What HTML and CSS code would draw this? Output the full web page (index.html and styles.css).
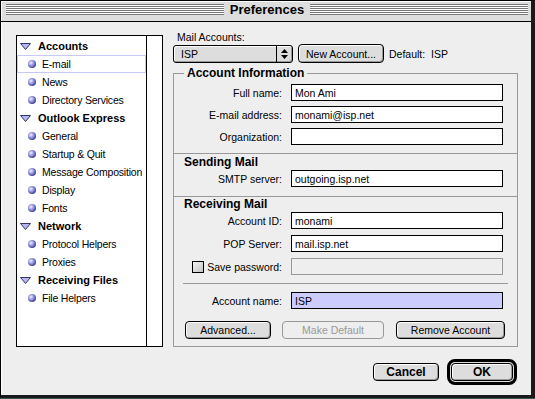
FILE: index.html
```html
<!DOCTYPE html>
<html lang="en">

<head>
    <meta charset="UTF-8">
    <meta name="viewport" content="width=device-width, initial-scale=1.0">
    <title>Preferences</title>
    <link rel="stylesheet" href="styles.css">
</head>

<body>

    <div class="window">

        <!-- Title bar -->
        <div class="titlebar">
            <span class="stripes"></span>
            <span class="title">Preferences</span>
            <span class="stripes"></span>
        </div>

        <div class="content">

            <!-- Category list -->
            <div class="sidebar">
                <ul class="tree">
                    <li class="group"><svg class="twisty" width="11" height="7" viewBox="0 0 11 7"><polygon points="0.5,0.5 10.5,0.5 5.5,6.5" fill="#b8b8f0" stroke="#33336a" stroke-width="1"/></svg>Accounts</li>
                    <li class="item selected"><span class="bullet"></span>E-mail</li>
                    <li class="item"><span class="bullet"></span>News</li>
                    <li class="item"><span class="bullet"></span>Directory Services</li>
                    <li class="group"><svg class="twisty" width="11" height="7" viewBox="0 0 11 7"><polygon points="0.5,0.5 10.5,0.5 5.5,6.5" fill="#b8b8f0" stroke="#33336a" stroke-width="1"/></svg>Outlook Express</li>
                    <li class="item"><span class="bullet"></span>General</li>
                    <li class="item"><span class="bullet"></span>Startup &amp; Quit</li>
                    <li class="item"><span class="bullet"></span>Message Composition</li>
                    <li class="item"><span class="bullet"></span>Display</li>
                    <li class="item"><span class="bullet"></span>Fonts</li>
                    <li class="group"><svg class="twisty" width="11" height="7" viewBox="0 0 11 7"><polygon points="0.5,0.5 10.5,0.5 5.5,6.5" fill="#b8b8f0" stroke="#33336a" stroke-width="1"/></svg>Network</li>
                    <li class="item"><span class="bullet"></span>Protocol Helpers</li>
                    <li class="item"><span class="bullet"></span>Proxies</li>
                    <li class="group"><svg class="twisty" width="11" height="7" viewBox="0 0 11 7"><polygon points="0.5,0.5 10.5,0.5 5.5,6.5" fill="#b8b8f0" stroke="#33336a" stroke-width="1"/></svg>Receiving Files</li>
                    <li class="item"><span class="bullet"></span>File Helpers</li>
                </ul>
                <div class="scroll-track"></div>
            </div>

            <!-- Account settings -->
            <div class="main">
                <div class="accounts-label">Mail Accounts:</div>
                <div class="accounts-row">
                    <div class="popup">
                        <span class="popup-value">ISP</span>
                        <span class="popup-arrows">
                            <svg width="7" height="10" viewBox="0 0 7 10"><polygon points="3.5,0 7,4 0,4" fill="#000"/><polygon points="0,6 7,6 3.5,10" fill="#000"/></svg>
                        </span>
                    </div>
                    <button class="btn new-account-btn">New Account...</button>
                    <span class="default-label">Default:&nbsp; ISP</span>
                </div>

                <fieldset class="group-box">
                    <legend>Account Information</legend>

                    <div class="group-body">
                        <div class="field-row">
                            <label>Full name:</label>
                            <input type="text" value="Mon Ami">
                        </div>
                        <div class="field-row">
                            <label>E-mail address:</label>
                            <input type="text" value="monami@isp.net">
                        </div>
                        <div class="field-row">
                            <label>Organization:</label>
                            <input type="text" value="">
                        </div>

                        <div class="divider divider-wide first"></div>
                        <div class="section-title">Sending Mail</div>
                        <div class="field-row">
                            <label>SMTP server:</label>
                            <input type="text" value="outgoing.isp.net">
                        </div>

                        <div class="divider divider-wide second"></div>
                        <div class="section-title">Receiving Mail</div>
                        <div class="field-row spaced">
                            <label>Account ID:</label>
                            <input type="text" value="monami">
                        </div>
                        <div class="field-row spaced">
                            <label>POP Server:</label>
                            <input type="text" value="mail.isp.net">
                        </div>
                        <div class="field-row tight">
                            <label class="check-label"><span class="checkbox"></span>Save password:</label>
                            <input type="password" class="disabled-input" disabled>
                        </div>

                        <div class="divider divider-inset"></div>
                        <div class="field-row">
                            <label>Account name:</label>
                            <input type="text" class="name-input" value="ISP">
                        </div>

                        <div class="account-actions">
                            <button class="btn advanced-btn">Advanced...</button>
                            <button class="btn make-default-btn" disabled>Make Default</button>
                            <button class="btn remove-btn">Remove Account</button>
                        </div>
                    </div>
                </fieldset>

                <div class="dialog-actions">
                    <button class="btn bold-btn cancel-btn">Cancel</button>
                    <span class="default-ring"><button class="btn bold-btn ok-btn">OK</button></span>
                </div>
            </div>
        </div>
    </div>

</body>

</html>
```

FILE: styles.css
```css
/* General Styling */
html,
body {
    margin: 0;
    padding: 0;
    background-color: #2c5c50;
}

body {
    font-family: 'Liberation Sans', Arial, sans-serif;
    font-size: 10.5px;
    color: #000;
}

/* Window frame */
.window {
    width: 535px;
    height: 398px;
    box-sizing: border-box;
    border-top: 1px solid #000;
    border-left: 1px solid #000;
    border-right: 4px solid #1a1a1a;
    border-bottom: 3px solid #1a1a1a;
    background-color: #eeeeee;
    display: flex;
    flex-direction: column;
}

/* Title bar */
.titlebar {
    display: flex;
    align-items: flex-start;
    padding: 3px 3px 0 5px;
    box-sizing: border-box;
    height: 21px;
    background-color: #dddddd;
    border-bottom: 1px solid #000;
    box-shadow: inset 1px 1px 0 #fff;
}

.stripes {
    flex: 1;
    height: 11px;
    background: repeating-linear-gradient(to bottom, #777 0, #777 1px, #fff 1px, #fff 2px);
}

.title {
    padding: 0 6px;
    margin-top: -2px;
    font-size: 13px;
    font-weight: bold;
    line-height: 15px;
}

/* Content */
.content {
    flex: 1;
    display: flex;
    align-items: flex-start;
    padding-left: 15px;
    box-shadow: inset 1px 0 0 #fff;
}

/* Sidebar list */
.sidebar {
    width: 147px;
    height: 312px;
    margin-top: 13px;
    box-sizing: border-box;
    border: 1px solid #000;
    background-color: #fff;
    display: flex;
}

.tree {
    list-style-type: none;
    margin: 0;
    padding: 1px 0 0 0;
    flex: 1;
    min-width: 0;
}

.tree li {
    height: 18px;
    display: flex;
    align-items: center;
    white-space: nowrap;
}

.tree .group {
    font-size: 11px;
    font-weight: bold;
    padding-left: 3px;
}

.twisty {
    margin-right: 7px;
    flex-shrink: 0;
}

.tree .item {
    padding-left: 11px;
    letter-spacing: -0.2px;
}

.tree .selected {
    border: 1px solid #c8c8f4;
    box-sizing: border-box;
    padding-left: 10px;
}

.bullet {
    width: 8px;
    height: 8px;
    border-radius: 50%;
    margin-right: 6px;
    flex-shrink: 0;
    background: radial-gradient(circle at 3px 3px, #f4f4ff 0, #9a9ae6 35%, #3a3a88 75%, #1c1c44 100%);
}

.scroll-track {
    width: 15px;
    flex-shrink: 0;
    border-left: 1px solid #000;
}

/* Main panel */
.main {
    width: 345px;
    margin-left: 10px;
    padding-top: 9px;
}

.accounts-label {
    line-height: 13px;
    padding-left: 4px;
}

.accounts-row {
    display: flex;
    align-items: center;
    height: 19px;
}

.popup {
    width: 120px;
    height: 18px;
    box-sizing: border-box;
    border: 1px solid #000;
    border-radius: 3px;
    background-color: #dddddd;
    box-shadow: inset 1px 1px 0 #fff, inset -1px -1px 0 #999;
    display: flex;
    align-items: center;
}

.popup-value {
    flex: 1;
    padding-left: 7px;
}

.popup-arrows {
    width: 15px;
    height: 100%;
    border-left: 1px solid #000;
    display: flex;
    align-items: center;
    justify-content: center;
}

.btn {
    font-family: 'Liberation Sans', Arial, sans-serif;
    font-size: 10.5px;
    color: #000;
    height: 18px;
    padding: 0;
    box-sizing: border-box;
    border: 1px solid #000;
    border-radius: 4px;
    background-color: #dddddd;
    box-shadow: inset 1px 1px 0 #fff, inset -1px -1px 0 #999;
}

.new-account-btn {
    width: 86px;
    height: 19px;
    margin-left: 5px;
}

.default-label {
    margin-left: 5px;
}

/* Group box */
.group-box {
    margin: 3px 0 0 0;
    padding: 4px 10px 7px 10px;
    width: 345px;
    box-sizing: border-box;
    border: 1px solid #999;
    min-width: 0;
}

.group-box legend {
    font-size: 12px;
    font-weight: bold;
    line-height: 14px;
    padding: 0 3px;
}

.group-body {
    display: flex;
    flex-direction: column;
}

.field-row {
    display: grid;
    grid-template-columns: 101px 212px;
    column-gap: 6px;
    align-items: center;
    height: 17px;
    margin-bottom: 5px;
}

.field-row.spaced {
    margin-bottom: 6px;
}

.field-row.tight {
    margin-bottom: 4px;
}

.field-row label {
    text-align: right;
    padding-right: 3px;
    white-space: nowrap;
}

.field-row input {
    width: 212px;
    height: 17px;
    box-sizing: border-box;
    margin: 0;
    padding: 0 3px;
    border: 1px solid #000;
    background-color: #fff;
    font-family: 'Liberation Sans', Arial, sans-serif;
    font-size: 10.5px;
    color: #000;
    outline: none;
}

.field-row .disabled-input {
    background-color: #eeeeee;
    border-color: #999;
}

.field-row .name-input {
    background-color: #ccccff;
}

.check-label {
    display: flex;
    align-items: center;
    justify-content: flex-end;
}

.checkbox {
    width: 12px;
    height: 12px;
    box-sizing: border-box;
    border: 1px solid #000;
    background: linear-gradient(135deg, #f4f4f4, #c4c4c4);
    margin-right: 3px;
}

.divider {
    border-top: 1px solid #999;
}

.divider-wide {
    margin-left: -10px;
    margin-right: -10px;
}

.divider.first {
    margin-top: 3px;
}

.divider.second {
    margin-top: 4px;
}

.divider-inset {
    margin: 4px -1px 8px -1px;
}

.section-title {
    font-size: 12px;
    font-weight: bold;
    line-height: 14px;
    margin: 1px 0 1px 0;
}

.divider.second + .section-title {
    margin-top: 0;
}

/* Button row inside group box */
.account-actions {
    display: flex;
    gap: 11px;
    margin: 7px 0 0 1px;
}

.advanced-btn {
    width: 86px;
}

.make-default-btn {
    width: 102px;
    color: #999;
    border-color: #999;
    background-color: #eeeeee;
    box-shadow: none;
}

.remove-btn {
    width: 109px;
    margin-left: 1px;
}

/* Dialog buttons */
.dialog-actions {
    display: flex;
    justify-content: flex-end;
    align-items: center;
    gap: 8px;
    margin-top: 12px;
    padding-right: 1px;
}

.bold-btn {
    font-size: 12px;
    font-weight: bold;
}

.cancel-btn {
    width: 66px;
}

.default-ring {
    display: flex;
    padding: 1px;
    border: 3px solid #000;
    border-radius: 8px;
    background-color: #dddddd;
}

.ok-btn {
    width: 62px;
}
```
